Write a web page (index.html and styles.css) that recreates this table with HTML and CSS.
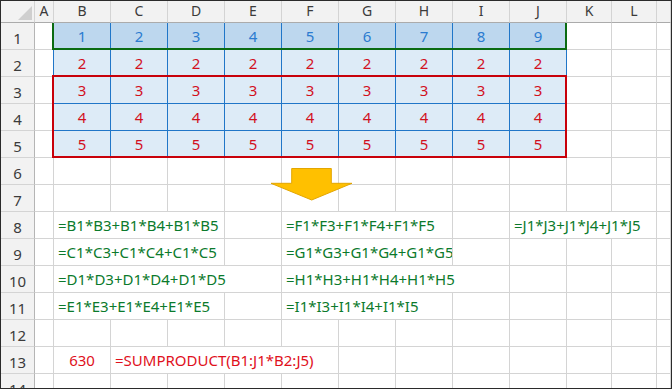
FILE: index.html
```html
<!DOCTYPE html>
<html>
<head>
<meta charset="utf-8">
<link rel="stylesheet" href="styles.css">
</head>
<body>
<div class="sheet">
  <div class="grid">
    <!-- header row -->
    <div class="ch corner"><span class="tri"></span></div>
    <div class="ch">A</div><div class="ch">B</div><div class="ch">C</div><div class="ch">D</div><div class="ch">E</div><div class="ch">F</div><div class="ch">G</div><div class="ch">H</div><div class="ch">I</div><div class="ch">J</div><div class="ch">K</div><div class="ch">L</div><div class="ch"></div>

    <!-- row 1 -->
    <div class="rh">1</div><div class="c ab"></div>
    <div class="t1">1</div><div class="t1">2</div><div class="t1">3</div><div class="t1">4</div><div class="t1">5</div><div class="t1">6</div><div class="t1">7</div><div class="t1">8</div><div class="t1">9</div>
    <div class="c"></div><div class="c"></div><div class="c"></div>

    <!-- row 2 -->
    <div class="rh">2</div><div class="c ab"></div>
    <div class="t2">2</div><div class="t2">2</div><div class="t2">2</div><div class="t2">2</div><div class="t2">2</div><div class="t2">2</div><div class="t2">2</div><div class="t2">2</div><div class="t2">2</div>
    <div class="c"></div><div class="c"></div><div class="c"></div>

    <!-- row 3 -->
    <div class="rh">3</div><div class="c ab"></div>
    <div class="t2">3</div><div class="t2">3</div><div class="t2">3</div><div class="t2">3</div><div class="t2">3</div><div class="t2">3</div><div class="t2">3</div><div class="t2">3</div><div class="t2">3</div>
    <div class="c"></div><div class="c"></div><div class="c"></div>

    <!-- row 4 -->
    <div class="rh">4</div><div class="c ab"></div>
    <div class="t2">4</div><div class="t2">4</div><div class="t2">4</div><div class="t2">4</div><div class="t2">4</div><div class="t2">4</div><div class="t2">4</div><div class="t2">4</div><div class="t2">4</div>
    <div class="c"></div><div class="c"></div><div class="c"></div>

    <!-- row 5 -->
    <div class="rh">5</div><div class="c ab"></div>
    <div class="t2">5</div><div class="t2">5</div><div class="t2">5</div><div class="t2">5</div><div class="t2">5</div><div class="t2">5</div><div class="t2">5</div><div class="t2">5</div><div class="t2">5</div>
    <div class="c"></div><div class="c"></div><div class="c"></div>

    <!-- row 6 -->
    <div class="rh">6</div>
    <div class="c"></div><div class="c"></div><div class="c"></div><div class="c"></div><div class="c"></div><div class="c"></div><div class="c"></div><div class="c"></div><div class="c"></div><div class="c"></div><div class="c"></div><div class="c"></div><div class="c"></div>

    <!-- row 7 -->
    <div class="rh">7</div>
    <div class="c"></div><div class="c"></div><div class="c"></div><div class="c"></div><div class="c"></div><div class="c"></div><div class="c"></div><div class="c"></div><div class="c"></div><div class="c"></div><div class="c"></div><div class="c"></div><div class="c"></div>

    <!-- row 8 -->
    <div class="rh">8</div>
    <div class="c"></div>
    <div class="c f s3">=B1*B3+B1*B4+B1*B5</div>
    <div class="c"></div>
    <div class="c f s3">=F1*F3+F1*F4+F1*F5</div>
    <div class="c"></div>
    <div class="c f s3">=J1*J3+J1*J4+J1*J5</div>
    <div class="c"></div>

    <!-- row 9 -->
    <div class="rh">9</div>
    <div class="c"></div>
    <div class="c f s3">=C1*C3+C1*C4+C1*C5</div>
    <div class="c"></div>
    <div class="c f s3">=G1*G3+G1*G4+G1*G5</div>
    <div class="c"></div><div class="c"></div><div class="c"></div><div class="c"></div><div class="c"></div>

    <!-- row 10 -->
    <div class="rh">10</div>
    <div class="c"></div>
    <div class="c f s4">=D1*D3+D1*D4+D1*D5</div>
    <div class="c f s4">=H1*H3+H1*H4+H1*H5</div>
    <div class="c"></div><div class="c"></div><div class="c"></div><div class="c"></div>

    <!-- row 11 -->
    <div class="rh">11</div>
    <div class="c"></div>
    <div class="c f s3">=E1*E3+E1*E4+E1*E5</div>
    <div class="c"></div>
    <div class="c f s3">=I1*I3+I1*I4+I1*I5</div>
    <div class="c"></div><div class="c"></div><div class="c"></div><div class="c"></div><div class="c"></div>

    <!-- row 12 -->
    <div class="rh">12</div>
    <div class="c"></div><div class="c"></div><div class="c"></div><div class="c"></div><div class="c"></div><div class="c"></div><div class="c"></div><div class="c"></div><div class="c"></div><div class="c"></div><div class="c"></div><div class="c"></div><div class="c"></div>

    <!-- row 13 -->
    <div class="rh">13</div>
    <div class="c"></div>
    <div class="c r ctr">630</div>
    <div class="c r f2 s4">=SUMPRODUCT(B1:J1*B2:J5)</div>
    <div class="c"></div><div class="c"></div><div class="c"></div><div class="c"></div><div class="c"></div><div class="c"></div><div class="c"></div>

    <!-- row 14 -->
    <div class="rh">14</div>
    <div class="c"></div><div class="c"></div><div class="c"></div><div class="c"></div><div class="c"></div><div class="c"></div><div class="c"></div><div class="c"></div><div class="c"></div><div class="c"></div><div class="c"></div><div class="c"></div><div class="c"></div>
  </div>

  <div class="box-green"></div>
  <div class="box-red"></div>

  <svg class="arrow" width="84" height="36" viewBox="0 0 84 36">
    <polygon points="21.7,1.5 61.3,1.5 61.3,16.3 82,16.3 41.7,33 1,16.3 21.7,16.3" fill="#ffc000" stroke="#e3a600" stroke-width="1"/>
  </svg>
</div>
</body>
</html>
```

FILE: styles.css
```css
html, body {
  margin: 0;
  padding: 0;
  background: #ffffff;
}

.sheet {
  position: relative;
  width: 672px;
  height: 389px;
  border: 1px solid #2b2b2b;
  box-sizing: border-box;
  overflow: hidden;
  font-family: "Noto Sans", "Open Sans", sans-serif;
}

.grid {
  display: grid;
  grid-template-columns: 34px 19px repeat(9, 57px) 45px 45px 14px;
  grid-template-rows: 22px repeat(14, 27px);
}

.grid > div {
  box-sizing: border-box;
  border-right: 1px solid #d4d4d4;
  border-bottom: 1px solid #d4d4d4;
  display: flex;
  align-items: center;
  justify-content: center;
  white-space: nowrap;
  overflow: hidden;
}

.ch {
  background: #f2f2f2;
  border-bottom-color: #ababab !important;
  color: #3b3b3b;
  font-size: 14px;
  padding-bottom: 3px;
}

.corner {
  position: relative;
  border-right-color: #d0d0d0;
}

.tri {
  position: absolute;
  left: 17px;
  top: 5px;
  width: 0;
  height: 0;
  border-left: 14px solid transparent;
  border-bottom: 14px solid #cfcfcf;
}

.rh {
  background: #f2f2f2;
  border-right-color: #b5b5b5 !important;
  color: #3b3b3b;
  font-size: 15px;
  padding-top: 4px;
}

.ab {
  border-right-color: #2076c8 !important;
}

.t1 {
  background: #bdd7ee;
  border-right-color: #2076c8 !important;
  border-bottom-color: #2076c8 !important;
  color: #2b7bd0;
  font-size: 15px;
}

.t2 {
  background: #ddebf7;
  border-right-color: #2076c8 !important;
  border-bottom-color: #2076c8 !important;
  color: #d2101e;
  font-size: 15px;
}

.f {
  justify-content: flex-start !important;
  padding-left: 4px;
  color: #0b7a2c;
  font-size: 15px;
}

.r {
  color: #e0101c;
  font-size: 15px;
}

.f2 {
  justify-content: flex-start !important;
  padding-left: 4px;
}

.s3 { grid-column: span 3; }
.s4 { grid-column: span 4; }

.box-green {
  position: absolute;
  left: 51px;
  top: 22px;
  width: 515px;
  height: 27px;
  box-sizing: border-box;
  border: 2px solid #0a6b12;
  border-top: none;
}

.box-red {
  position: absolute;
  left: 51px;
  top: 74px;
  width: 515px;
  height: 83px;
  box-sizing: border-box;
  border: 2px solid #c8000a;
}

.arrow {
  position: absolute;
  left: 269px;
  top: 166px;
}
```
